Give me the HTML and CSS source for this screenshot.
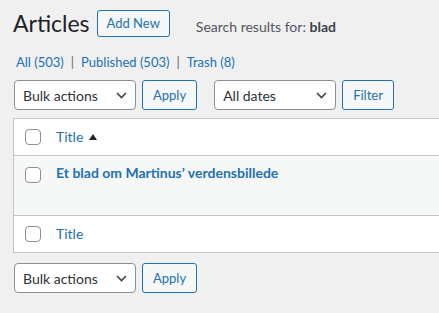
FILE: index.html
```html
<!DOCTYPE html>
<html>
<head>
  <link rel="stylesheet" href="styles.css">
</head>
<body>
  <div class="wrap">
    <div class="page-head">
      <h1 class="page-title">Articles</h1>
      <a class="title-action" href="#">Add New</a>
      <span class="subtitle">Search results for: <strong>blad</strong></span>
    </div>

    <ul class="subsubsub">
      <li><a href="#">All (503)</a></li>
      <li class="sep">|</li>
      <li><a href="#">Published (503)</a></li>
      <li class="sep">|</li>
      <li><a href="#">Trash (8)</a></li>
    </ul>

    <div class="tablenav top">
      <div class="select">
        <span>Bulk actions</span>
        <svg class="chevron" width="11" height="7" viewBox="0 0 11 7"><path d="M1 1l4.5 4.5L10 1" fill="none" stroke="#3c434a" stroke-width="1.6"/></svg>
      </div>
      <button class="button">Apply</button>
      <div class="select dates">
        <span>All dates</span>
        <svg class="chevron" width="11" height="7" viewBox="0 0 11 7"><path d="M1 1l4.5 4.5L10 1" fill="none" stroke="#3c434a" stroke-width="1.6"/></svg>
      </div>
      <button class="button">Filter</button>
    </div>

    <div class="list-table">
      <div class="list-row head">
        <div class="check-col"><input type="checkbox" class="cb"></div>
        <div class="title-col"><a href="#">Title</a>
          <svg class="sort" width="8" height="6" viewBox="0 0 8 6"><path d="M4 0L8 6H0z" fill="#1d2327"/></svg>
        </div>
      </div>
      <div class="list-row item">
        <div class="check-col"><input type="checkbox" class="cb"></div>
        <div class="title-col"><a class="row-title" href="#">Et blad om Martinus’ verdensbillede</a></div>
      </div>
      <div class="list-row foot">
        <div class="check-col"><input type="checkbox" class="cb"></div>
        <div class="title-col"><a href="#">Title</a></div>
      </div>
    </div>

    <div class="tablenav bottom">
      <div class="select">
        <span>Bulk actions</span>
        <svg class="chevron" width="11" height="7" viewBox="0 0 11 7"><path d="M1 1l4.5 4.5L10 1" fill="none" stroke="#3c434a" stroke-width="1.6"/></svg>
      </div>
      <button class="button">Apply</button>
    </div>
  </div>
</body>
</html>
```

FILE: styles.css
```css
body {
  margin: 0;
  background-color: #f0f0f1;
  color: #3c434a;
  font-family: Lato, "Open Sans", sans-serif;
  font-size: 13px;
  overflow: hidden;
}

a {
  color: #2271b1;
  text-decoration: none;
}

.wrap {
  padding-left: 13px;
}

/* heading line */
.page-head {
  display: flex;
  align-items: baseline;
  padding-top: 8px;
}
.page-title {
  margin: 0 7px 0 0;
  font-size: 23px;
  font-weight: 400;
  line-height: 30px;
  color: #1d2327;
}
.title-action {
  align-self: center;
  padding: 3px 9px;
  line-height: 19px;
  font-size: 13px;
  border: 1px solid #2271b1;
  border-radius: 3px;
  background-color: #f6f7f7;
}
.subtitle {
  margin-left: 26px;
  font-size: 14px;
  line-height: 20px;
  color: #50575e;
}
.subtitle strong {
  color: #3c434a;
}

/* status links */
.subsubsub {
  display: flex;
  gap: 7px;
  list-style: none;
  margin: 14px 0 0 3px;
  padding: 0;
  line-height: 20px;
}
.sep {
  color: #646970;
}

/* bulk bar */
.tablenav {
  display: flex;
  align-items: center;
}
.tablenav.top {
  margin-top: 8px;
  margin-left: 1px;
}
.tablenav.bottom {
  margin-top: 10px;
  margin-left: 1px;
}
.select {
  display: flex;
  align-items: center;
  justify-content: space-between;
  box-sizing: border-box;
  width: 122px;
  height: 30px;
  padding: 0 8px 0 8px;
  border: 1px solid #8c8f94;
  border-radius: 4px;
  background-color: #fff;
  font-size: 14px;
  color: #2c3338;
}
.select.dates {
  margin-left: 17px;
}
.button {
  box-sizing: border-box;
  height: 30px;
  margin-left: 6px;
  padding: 0 10px;
  border: 1px solid #2271b1;
  border-radius: 3px;
  background-color: #f6f7f7;
  color: #2271b1;
  font-family: inherit;
  font-size: 13px;
}

/* list */
.list-table {
  margin-top: 8px;
  border: 1px solid #c3c4c7;
  border-right: 0;
  background-color: #fff;
}
.list-row {
  display: flex;
}
.list-row.head {
  border-bottom: 1px solid #c3c4c7;
}
.list-row.foot {
  border-top: 1px solid #c3c4c7;
}
.list-row.item {
  min-height: 59px;
  background-color: #f6f7f7;
}
.check-col {
  width: 32px;
  box-sizing: border-box;
  padding-left: 11px;
  display: flex;
  align-items: center;
}
.item .check-col {
  align-items: flex-start;
  padding-top: 11px;
}
.cb {
  appearance: none;
  box-sizing: border-box;
  width: 16px;
  height: 16px;
  margin: 0;
  border: 1px solid #8c8f94;
  border-radius: 4px;
  background-color: #fff;
}
.title-col {
  display: flex;
  align-items: center;
  padding: 8px 10px;
  font-size: 14px;
  line-height: 20px;
}
.item .title-col {
  align-items: flex-start;
  padding-top: 7px;
}
.sort {
  margin-left: 6px;
  margin-top: -1px;
}
.row-title {
  font-weight: 700;
}
```
